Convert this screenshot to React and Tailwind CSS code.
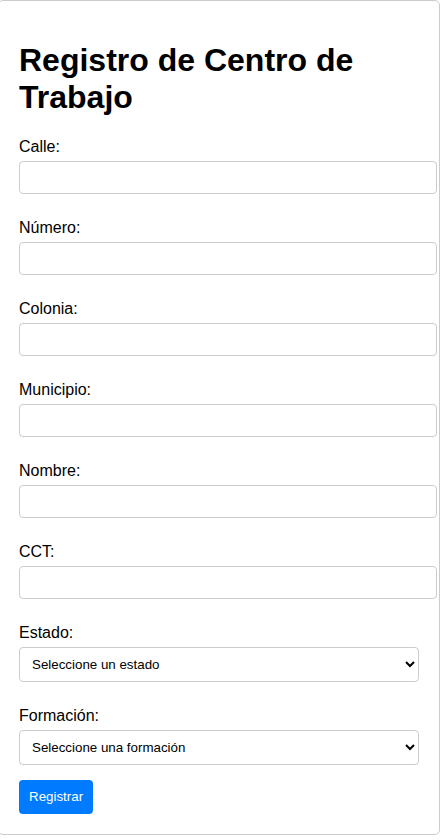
import { useState } from "react";

const campos = [
  { id: "calle", label: "Calle:" },
  { id: "numero", label: "Número:" },
  { id: "colonia", label: "Colonia:" },
  { id: "municipio", label: "Municipio:" },
  { id: "nombre", label: "Nombre:" },
  { id: "cct", label: "CCT:" },
];

export default function App() {
  const [form, setForm] = useState({});

  const update = (id) => (e) => setForm((f) => ({ ...f, [id]: e.target.value }));

  return (
    <div className="min-h-[840px] bg-white font-['Liberation_Sans',Arial,sans-serif] text-black">
      <form
        onSubmit={(e) => e.preventDefault()}
        className="-ml-[2px] w-[442px] rounded-[5px] border border-[#cccccc] px-5 pt-5 pb-5"
      >
        <h1 className="my-[21.44px] text-[32px] font-bold leading-[normal]">
          Registro de Centro de Trabajo
        </h1>

        {campos.map((c) => (
          <div key={c.id}>
            <label htmlFor={c.id} className="mb-[5px] block text-[16px] leading-[normal]">
              {c.label}
            </label>
            <input
              id={c.id}
              type="text"
              value={form[c.id] || ""}
              onChange={update(c.id)}
              className="mb-[25px] block h-[33px] w-[418px] rounded-[4px] border border-[#cccccc] px-2 text-[13.33px] outline-none"
            />
          </div>
        ))}

        <label htmlFor="estado" className="mb-[5px] block text-[16px] leading-[normal]">
          Estado:
        </label>
        <select
          id="estado"
          value={form.estado || ""}
          onChange={update("estado")}
          className="mb-[25.5px] block h-[35px] w-[400px] rounded-[4px] border border-[#cccccc] bg-white px-2 text-[13.33px]"
        >
          <option value="">Seleccione un estado</option>
        </select>

        <label htmlFor="formacion" className="mb-[5px] block text-[16px] leading-[normal]">
          Formación:
        </label>
        <select
          id="formacion"
          value={form.formacion || ""}
          onChange={update("formacion")}
          className="mb-[15px] block h-[35px] w-[400px] rounded-[4px] border border-[#cccccc] bg-white px-2 text-[13.33px]"
        >
          <option value="">Seleccione una formación</option>
        </select>

        <button
          type="submit"
          className="block h-[34px] rounded-[4px] bg-[#007bff] px-[10px] text-[13.33px] text-white"
        >
          Registrar
        </button>
      </form>
    </div>
  );
}
